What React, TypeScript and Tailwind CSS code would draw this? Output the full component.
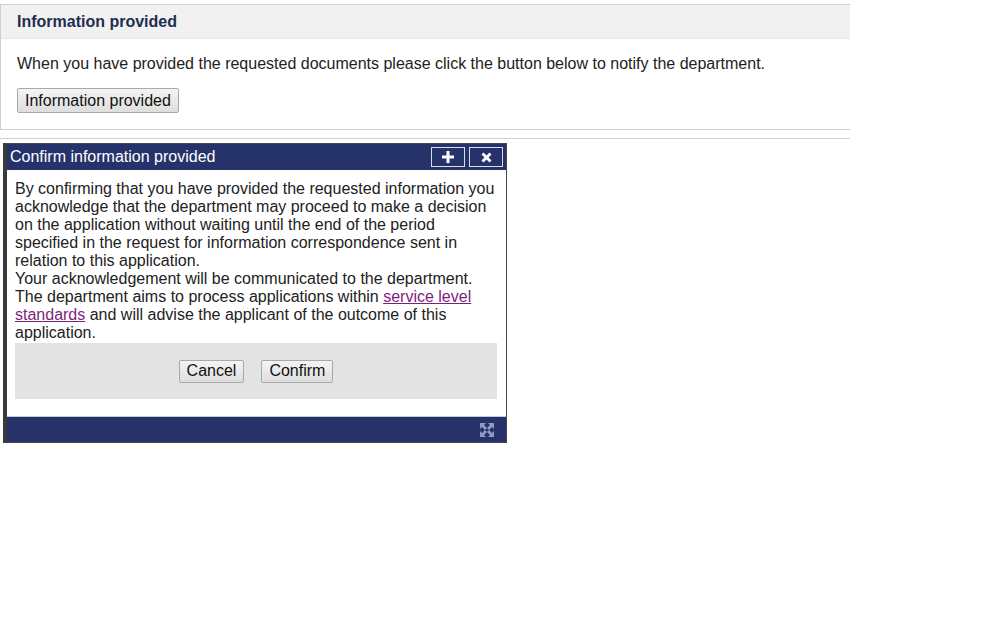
import React from "react";

const btn =
  "px-[7px] rounded-[2px] border border-[#a9a9a9] bg-gradient-to-b from-[#f4f4f4] to-[#dedede] text-[16px] leading-[18px] text-[#111]";

function ResizeIcon() {
  return (
    <svg width="16" height="16" viewBox="0 0 16 16" fill="#8d9cc6">
      <polygon points="1,1 7,1 5,3 8,6 6,8 3,5 1,7" />
      <polygon points="15,1 15,7 13,5 10,8 8,6 11,3 9,1" />
      <polygon points="1,15 1,9 3,11 6,8 8,10 5,13 7,15" />
      <polygon points="15,15 9,15 11,13 8,10 10,8 13,11 15,9" />
    </svg>
  );
}

export default function App() {
  return (
    <div className="min-h-screen bg-white pt-[4px] text-[16px] text-[#222] font-['Liberation_Sans',Arial,sans-serif]">
      <div className="w-[850px] border border-r-0 border-[#cfcfcf]">
        <div className="h-[34px] px-4 flex items-center bg-[#f1f1f1] border-b border-[#e6e6e6] font-bold text-[#1f2e50]">
          Information provided
        </div>
        <div className="px-4 pt-[16px] pb-[16px]">
          <p className="leading-[18px]">
            When you have provided the requested documents please click the button below to notify the department.
          </p>
          <button className={btn + " h-[25px] mt-[15px]"}>Information provided</button>
        </div>
      </div>
      <div className="w-[850px] h-px mt-2 bg-[#cfcfcf]" />

      <div className="mt-[4px] ml-[3px] w-[504px] border border-l-[4px] border-[#4a4a4a] border-l-[#3a3a3a] bg-white">
        <div className="h-[26px] pl-[3px] pr-[3px] flex items-center justify-between bg-[#26336a] text-white">
          <span className="leading-[18px]">Confirm information provided</span>
          <div className="flex gap-[4px]">
            <div className="w-[34px] h-[20px] border border-[#d8dcef] flex items-center justify-center">
              <svg width="12" height="12" viewBox="0 0 12 12" fill="white">
                <rect x="4.5" y="0" width="3" height="12" />
                <rect x="0" y="4.5" width="12" height="3" />
              </svg>
            </div>
            <div className="w-[34px] h-[20px] border border-[#d8dcef] flex items-center justify-center">
              <svg width="11" height="11" viewBox="0 0 11 11" stroke="white" strokeWidth="2.8">
                <line x1="1.5" y1="1.5" x2="9.5" y2="9.5" />
                <line x1="9.5" y1="1.5" x2="1.5" y2="9.5" />
              </svg>
            </div>
          </div>
        </div>
        <div className="pl-[8px] pr-[9px] pt-[10px] pb-[17px] leading-[18px] border-b border-[#c9cbd9]">
          <p>
            By confirming that you have provided the requested information you acknowledge that the department may
            proceed to make a decision on the application without waiting until the end of the period specified in the
            request for information correspondence sent in relation to this application.
          </p>
          <p>Your acknowledgement will be communicated to the department.</p>
          <p>
            The department aims to process applications within{" "}
            <a href="#" className="text-[#7d1f7d] underline">
              service level standards
            </a>{" "}
            and will advise the applicant of the outcome of this application.
          </p>
          <div className="mt-[1px] h-[56px] bg-[#e3e3e3] flex items-center justify-center gap-[17px]">
            <button className={btn + " h-[23px]"}>Cancel</button>
            <button className={btn + " h-[23px]"}>Confirm</button>
          </div>
        </div>
        <div className="h-[25px] bg-[#26336a] flex items-center justify-end pr-[11px]">
          <ResizeIcon />
        </div>
      </div>
    </div>
  );
}
